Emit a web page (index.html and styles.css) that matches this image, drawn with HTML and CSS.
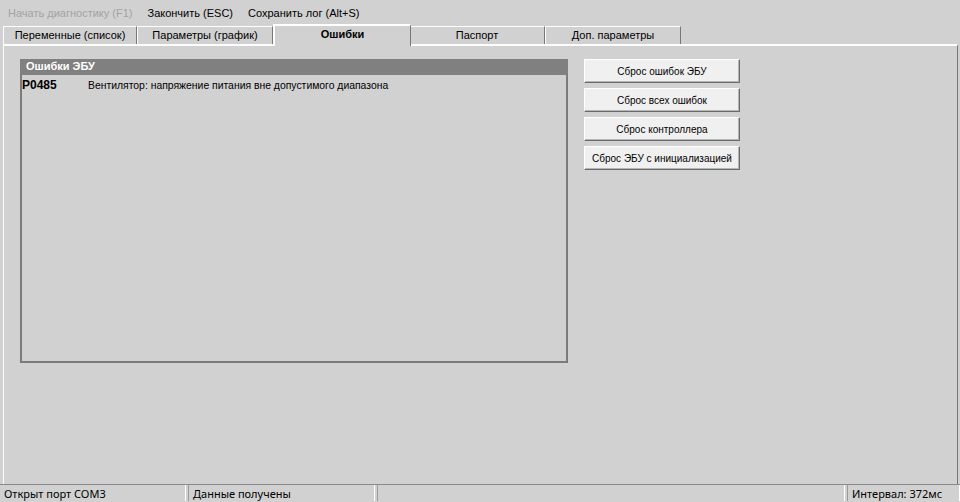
FILE: index.html
```html
<!DOCTYPE html>
<html lang="ru">
<head>
    <meta charset="UTF-8">
    <title>Диагностика ЭБУ</title>
    <link rel="stylesheet" href="styles.css">
</head>
<body>
    <div class="window">
        <div class="menu">
            <span class="menu-item disabled">Начать диагностику (F1)</span>
            <span class="menu-item">Закончить (ESC)</span>
            <span class="menu-item">Сохранить лог (Alt+S)</span>
        </div>

        <div class="tabs">
            <div class="tab">Переменные (список)</div>
            <div class="tab">Параметры (график)</div>
            <div class="tab active">Ошибки</div>
            <div class="tab">Паспорт</div>
            <div class="tab">Доп. параметры</div>
        </div>

        <div class="page">
            <div class="errors">
                <div class="errors-title">Ошибки ЭБУ</div>
                <div class="error-row">
                    <span class="code">P0485</span>
                    <span class="desc">Вентилятор: напряжение питания вне допустимого диапазона</span>
                </div>
            </div>
            <div class="actions">
                <button class="btn">Сброс ошибок ЭБУ</button>
                <button class="btn">Сброс всех ошибок</button>
                <button class="btn">Сброс контроллера</button>
                <button class="btn">Сброс ЭБУ с инициализацией</button>
            </div>
        </div>

        <div class="statusbar">
            <div class="status s1">Открыт порт COM3</div>
            <div class="status s2">Данные получены</div>
            <div class="status s3"></div>
            <div class="status s4">Интервал: 372мс</div>
        </div>
    </div>
</body>
</html>
```

FILE: styles.css
```css
body {
    margin: 0;
    background-color: #d1d1d1;
    font-family: "Liberation Sans", Arial, sans-serif;
    font-size: 11px;
    color: #000;
}
.window {
    width: 960px;
    height: 502px;
    display: flex;
    flex-direction: column;
    overflow: hidden;
}
.menu {
    height: 24px;
    display: flex;
    align-items: center;
    padding-left: 8px;
    gap: 15px;
    padding-top: 2px;
    box-sizing: border-box;
}
.menu-item.disabled {
    color: #a3a3a3;
}
.tabs {
    display: flex;
    height: 20px;
    padding-left: 3px;
    align-items: flex-end;
}
.tab {
    width: 136px;
    height: 18px;
    line-height: 17px;
    text-align: center;
    border-top: 1px solid #fff;
    border-left: 1px solid #fff;
    border-right: 1px solid #777;
    box-sizing: border-box;
    margin-top: 2px;
}
.tab:first-child {
    width: 134px;
}
.tab.active {
    height: 22px;
    width: 138px;
    margin: 0 -2px -2px 0;
    font-weight: bold;
    line-height: 16px;
    position: relative;
    background-color: #d1d1d1;
    z-index: 1;
    border-top: 2px solid #fff;
    border-left: 2px solid #fff;
}
.page {
    flex: 1;
    margin: 0 2px 0 3px;
    border-top: 2px solid #fff;
    border-left: 1px solid #fff;
    border-right: 1px solid #777;
    display: flex;
    padding: 13px 0 0 16px;
    gap: 16px;
}
.errors {
    width: 548px;
    height: 304px;
    box-sizing: border-box;
    border: 2px solid #7b7b7b;
    border-top: none;
}
.errors-title {
    background-color: #808080;
    color: #fff;
    font-weight: bold;
    height: 16px;
    line-height: 15px;
    margin: 0 -2px;
    padding-left: 6px;
}
.error-row {
    display: flex;
    padding-top: 3px;
    line-height: 14px;
}
.code {
    width: 66px;
    font-weight: bold;
    font-size: 12px;
}
.desc {
    font-size: 10.4px;
    padding-top: 1px;
}
.actions {
    display: flex;
    flex-direction: column;
    gap: 5px;
}
.btn {
    width: 156px;
    height: 24px;
    background-color: #f0f0f0;
    border: 1px solid;
    border-color: #fff #6b6b6b #6b6b6b #fff;
    box-shadow: inset -1px -1px 0 #b5b5b5;
    font-family: "Liberation Sans", Arial, sans-serif;
    font-size: 10px;
    color: #000;
    padding: 0;
}
.statusbar {
    height: 17px;
    display: flex;
    border-top: 1px solid #8a8a8a;
    gap: 2px;
    font-family: "Noto Sans", sans-serif;
    font-size: 11px;
}
.status {
    height: 16px;
    line-height: 17px;
    padding-left: 4px;
    box-sizing: border-box;
    border-left: 1px solid #9a9a9a;
    border-right: 1px solid #fff;
    white-space: nowrap;
    overflow: hidden;
}
.s1 { width: 186px; border-left: none; }
.s2 { width: 187px; }
.s3 { width: 468px; }
.s4 { flex: 1; }
```
